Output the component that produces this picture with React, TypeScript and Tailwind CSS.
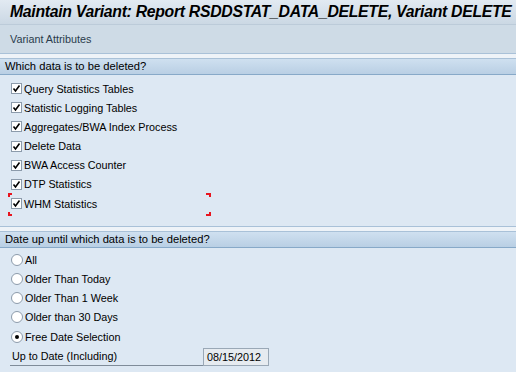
import { useState } from 'react'

const checks = [
  'Query Statistics Tables',
  'Statistic Logging Tables',
  'Aggregates/BWA Index Process',
  'Delete Data',
  'BWA Access Counter',
  'DTP Statistics',
  'WHM Statistics',
]

const radios = ['All', 'Older Than Today', 'Older Than 1 Week', 'Older than 30 Days', 'Free Date Selection']

function CheckBox({ checked }: { checked: boolean }) {
  return (
    <div className="w-[11px] h-[11px] border border-[#8c9bab] bg-white flex items-center justify-center">
      {checked && (
        <svg width="9" height="9" viewBox="0 0 9 9">
          <path d="M1.5 4.5 L3.5 7 L7.5 1.5" fill="none" stroke="#000" strokeWidth="1.6" />
        </svg>
      )}
    </div>
  )
}

function Radio({ on }: { on: boolean }) {
  return (
    <div className="w-[12px] h-[12px] rounded-full border border-[#8c9bab] bg-white flex items-center justify-center">
      {on && <div className="w-[4px] h-[4px] rounded-full bg-black" />}
    </div>
  )
}

function SectionHead({ text }: { text: string }) {
  return (
    <div>
      <div className="h-[6px] border-t border-[#a9c1d8] border-b bg-[#eef3f8]" />
      <div className="h-[16px] border-b border-[#87a9c8] bg-gradient-to-b from-[#cfe0f0] to-[#b9cfe4] pl-[5px] text-[11.2px] leading-[15px] text-black">
        {text}
      </div>
    </div>
  )
}

export default function App() {
  const [values, setValues] = useState(checks.map(() => true))
  const [sel, setSel] = useState(4)

  return (
    <div className="w-[516px] h-[372px] bg-[#dde8f3] overflow-hidden font-['Liberation_Sans',sans-serif]">
      {/* title */}
      <div className="h-[24px] bg-gradient-to-b from-[#e2eaf2] to-[#cbd8e4] pl-[10px] flex items-center">
        <span className="text-[15.8px] font-bold italic text-black tracking-[-0.3px] whitespace-nowrap">
          Maintain Variant: Report RSDDSTAT_DATA_DELETE, Variant DELETE
        </span>
      </div>
      {/* toolbar */}
      <div className="h-[29px] bg-[#cedbe6] border-t border-[#bccbd9] pl-[10px] flex items-center">
        <span className="text-[10.8px] text-[#2a3b4c]">Variant Attributes</span>
      </div>

      <SectionHead text="Which data is to be deleted?" />

      <div className="pt-[4px] pl-[11px] flex flex-col">
        {checks.map((c, i) => (
          <div
            key={c}
            className="relative h-[19.2px] flex items-center gap-[2px] cursor-default"
            onClick={() => setValues(values.map((v, j) => (j === i ? !v : v)))}
          >
            <CheckBox checked={values[i]} />
            <span className="text-[10.8px] text-black">{c}</span>
            {i === checks.length - 1 && (
              <>
                <div className="absolute left-[-3px] top-[-1px] w-[4px] h-[4px] border-l-2 border-t-2 border-[#e8141e]" />
                <div className="absolute left-[-3px] bottom-[-3px] w-[4px] h-[4px] border-l-2 border-b-2 border-[#e8141e]" />
                <div className="absolute left-[195px] top-[-1px] w-[5px] h-[4px] border-r-2 border-t-2 border-[#e8141e]" />
                <div className="absolute left-[195px] bottom-[-3px] w-[5px] h-[4px] border-r-2 border-b-2 border-[#e8141e]" />
              </>
            )}
          </div>
        ))}
      </div>

      <div className="h-[13px]" />
      <SectionHead text="Date up until which data is to be deleted?" />

      <div className="pt-[2px] pl-[11px] flex flex-col">
        {radios.map((r, i) => (
          <div key={r} className="h-[19.2px] flex items-center gap-[2px] cursor-default" onClick={() => setSel(i)}>
            <Radio on={sel === i} />
            <span className="text-[10.8px] text-black">{r}</span>
          </div>
        ))}
        <div className="h-[19px] flex items-end ml-[-1px] mt-[1px]">
          <div className="w-[193px] h-full border-b border-[#7f8c99] flex items-center">
            <span className="text-[10.8px] text-black pl-[2px]">Up to Date (Including)</span>
          </div>
          <div className="w-[66px] h-[18px] border border-[#9aa8b6] bg-[#e6ebf0] text-[10.8px] leading-[16px] text-black pl-[3px]">
            08/15/2012
          </div>
        </div>
      </div>
    </div>
  )
}
